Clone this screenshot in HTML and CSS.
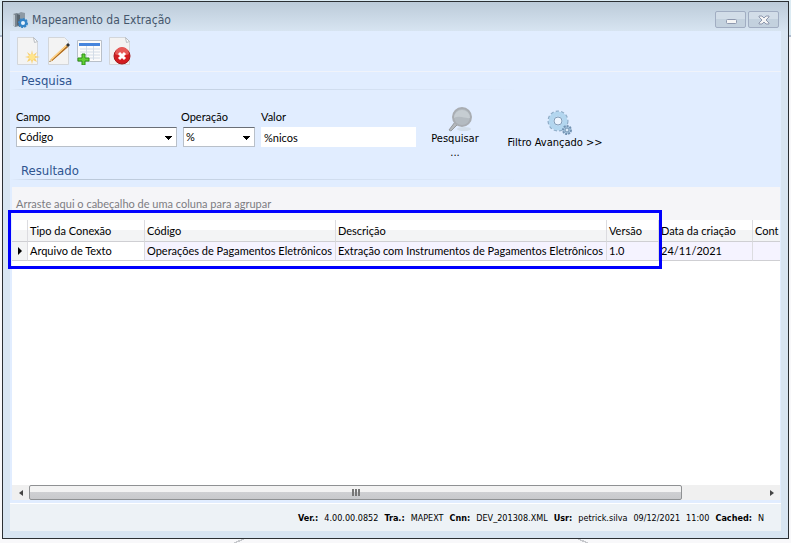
FILE: index.html
```
<!DOCTYPE html>
<html lang="pt-br">

<head>
    <meta charset="UTF-8">
    <meta name="viewport" content="width=device-width, initial-scale=1.0">
    <title>Mapeamento da Extração</title>
    <link rel="stylesheet" href="styles.css">
</head>

<body>
    <main class="janela">
        <header class="titulo">
            <svg class="logo" width="16" height="16" viewBox="0 0 16 16">
                <path d="M1 2l4-1 2 1v12l-4 1-2-2z" fill="#77838d" />
                <path d="M1 2l2 1v12l-2-2z" fill="#bcc7d0" />
                <path d="M5 2l4-2 4 1v13l-5 1-3-2z" fill="#8d9aa5" />
                <path d="M5 2l3 1v12l-3-2z" fill="#59656f" />
                <circle cx="11" cy="11" r="3" fill="#e8f4ff" stroke="#3484c7" stroke-width="2" />
                <circle cx="11" cy="11" r="4" fill="none" stroke="#3484c7" stroke-width="2" stroke-dasharray="2 1" />
            </svg>
            <h1>Mapeamento da Extração</h1>
            <button type="button" class="controle" aria-label="Minimizar">
                <svg width="12" height="12" viewBox="0 0 12 12">
                    <rect x="1.5" y="5.5" width="10" height="4" rx="1" fill="#f5f5f5" stroke="#8e98ae" />
                </svg>
            </button>
            <button type="button" class="controle" aria-label="Fechar">
                <svg width="12" height="12" viewBox="0 0 12 12">
                    <path d="M1 2h3l2 2 2-2h3v1L8 6l3 3v1H8L6 8l-2 2H1V9l3-3-3-3z" fill="#f5f5f5" stroke="#8e98ae" />
                </svg>
            </button>
        </header>

        <div class="conteudo">
            <nav class="ferramentas">
                <button type="button" aria-label="Novo">
                    <svg width="26" height="28" viewBox="0 0 26 28">
                        <path d="M2.5.5h16l4 4v23h-20z" fill="#f3f3f3" stroke="#d3d6da" />
                        <path d="M18.5.5l4 4-3 1z" fill="#fff" stroke="#b9bdc2" />
                        <path d="M17 13l1 5 4-3-2 4 5 1-5 1 2 4-4-2-1 4-1-4-4 2 2-4-4-1 4-1-2-4 4 3z" fill="#f8d06e" />
                        <circle cx="17" cy="20" r="3" fill="#ffe58c" />
                    </svg>
                </button>
                <button type="button" aria-label="Editar">
                    <svg width="26" height="28" viewBox="0 0 26 28">
                        <path d="M2.5.5h16l4 4v23h-20z" fill="#f3f3f3" stroke="#d3d6da" />
                        <path d="M3 25l2-3L20 8l2 2L6 24z" fill="#f2a33c" />
                        <path d="M5 22L20 8l1 1L6 23z" fill="#ffd58a" />
                        <path d="M6 24l16-14-1-1L6 23z" fill="#a86a26" />
                        <path d="M3 25l2-3 1 2z" fill="#dfc9a4" />
                        <path d="M3 25l1-1 1 0zM20 8l2-2 2 2-2 2z" fill="#333" />
                    </svg>
                </button>
                <button type="button" aria-label="Adicionar">
                    <svg width="26" height="28" viewBox="0 0 26 28">
                        <path d="M.5 3.5h24v21H.5z" fill="#fbfbfb" stroke="#b9c0c9" />
                        <path d="M2 6h21v3H2z" fill="#4584dc" />
                        <path d="M3 12h20M3 15h20M3 18h20M3 21h20M9.5 9v14M16.5 9v14" stroke="#d3dce7" />
                        <path d="M5 17h3v4h4v3H8v4H5v-4H1v-3h4z" fill="#62cf35" stroke="#2c9219" />
                    </svg>
                </button>
                <button type="button" aria-label="Excluir">
                    <svg width="26" height="28" viewBox="0 0 26 28">
                        <path d="M1.5.5h16l4 4v23h-20z" fill="#f3f3f3" stroke="#d3d6da" />
                        <path d="M17.5.5l4 4-3 1z" fill="#fff" stroke="#b9bdc2" />
                        <circle cx="14" cy="19" r="8" fill="#d31c20" stroke="#a31a1c" />
                        <path d="M7 17a7 7 0 0 1 14 0c-4 2-10 2-14 0z" fill="#e65a57" />
                        <path d="M11 16l6 6M17 16l-6 6" stroke="#fff" stroke-width="3" />
                    </svg>
                </button>
            </nav>

            <section class="pesquisa">
                <h2>Pesquisa</h2>
                <form class="filtros">
                    <p class="campo">
                        <label for="campo">Campo</label>
                        <select id="campo">
                            <option>Código</option>
                        </select>
                    </p>
                    <p class="campo operacao">
                        <label for="operacao">Operação</label>
                        <select id="operacao">
                            <option>%</option>
                        </select>
                    </p>
                    <p class="campo valor">
                        <label for="valor">Valor</label>
                        <input type="text" id="valor" value="%nicos">
                    </p>
                    <button type="button" class="acao pesquisar">
                        <svg width="34" height="26" viewBox="0 0 34 26">
                            <ellipse cx="26" cy="23" rx="7" ry="2" fill="#d3deea" />
                            <path d="M17 16l3 2-7 7-2-1z" fill="#b5b9bd" stroke="#94989c" />
                            <circle cx="24" cy="11" r="9" fill="#b4bbc1" stroke="#a9adb2" stroke-width="2" />
                            <path d="M16 12a8 8 0 0 1 16 0c-5 1-9-3-16 0z" fill="#c6cdd2" />
                        </svg>
                        <span>Pesquisar<br>...</span>
                    </button>
                    <button type="button" class="acao">
                        <svg width="34" height="26" viewBox="0 0 34 26">
                            <circle cx="20" cy="11" r="9" fill="none" stroke="#8daac5" stroke-width="3" stroke-dasharray="3 2" />
                            <circle cx="20" cy="11" r="7" fill="none" stroke="#b3d6ef" stroke-width="5" />
                            <circle cx="20" cy="11" r="4" fill="#edf5ff" stroke="#819cb7" />
                            <circle cx="29" cy="20" r="4" fill="#adcbe3" stroke="#7292b2" stroke-width="2" stroke-dasharray="2 1" />
                            <circle cx="29" cy="20" r="2" fill="#dcecfa" stroke="#7292b2" />
                        </svg>
                        <span>Filtro Avançado &gt;&gt;</span>
                    </button>
                </form>
            </section>

            <section class="resultado">
                <h2>Resultado</h2>
                <div class="grade">
                    <p class="agrupar">Arraste aqui o cabeçalho de uma coluna para agrupar</p>
                    <div class="area">
                        <table>
                            <colgroup>
                                <col class="c-marca">
                                <col class="c-tipo">
                                <col class="c-codigo">
                                <col class="c-descricao">
                                <col class="c-versao">
                                <col class="c-data">
                                <col class="c-cont">
                            </colgroup>
                            <thead>
                                <tr>
                                    <th></th>
                                    <th>Tipo da Conexão</th>
                                    <th>Código</th>
                                    <th>Descrição</th>
                                    <th>Versão</th>
                                    <th>Data da criação</th>
                                    <th>Cont</th>
                                </tr>
                            </thead>
                            <tbody>
                                <tr>
                                    <td class="marca"><svg width="4" height="8" viewBox="0 0 4 8"><path d="M0 0l4 4-4 4z" /></svg></td>
                                    <td class="foco">Arquivo de Texto</td>
                                    <td>Operações de Pagamentos Eletrônicos</td>
                                    <td>Extração com Instrumentos de Pagamentos Eletrônicos</td>
                                    <td>1.0</td>
                                    <td>24/11/2021</td>
                                    <td></td>
                                </tr>
                            </tbody>
                        </table>
                        <div class="destaque"></div>
                    </div>
                    <div class="rolagem">
                        <button type="button" aria-label="Rolar para a esquerda"><svg width="4" height="6" viewBox="0 0 4 6"><path d="M4 0L0 3l4 3z" fill="#444" /></svg></button>
                        <div class="trilho">
                            <div class="polegar"><i></i><i></i><i></i></div>
                        </div>
                        <button type="button" aria-label="Rolar para a direita"><svg width="4" height="6" viewBox="0 0 4 6"><path d="M0 0l4 3-4 3z" fill="#444" /></svg></button>
                    </div>
                </div>
            </section>

            <footer class="status">
                <b>Ver.:</b><span>4.00.00.0852</span>
                <b>Tra.:</b><span>MAPEXT</span>
                <b>Cnn:</b><span>DEV_201308.XML</span>
                <b>Usr:</b><span>petrick.silva</span>
                <span>09/12/2021</span><span>11:00</span>
                <b>Cached:</b><span>N</span>
            </footer>
        </div>
    </main>
</body>

</html>
```

FILE: styles.css
```
* {
    box-sizing: border-box;
}

body {
    background:
        linear-gradient(160deg, transparent 40%, #c6c8cc 40% 60%, transparent 60%) 30% 100% / 10px 4px no-repeat,
        linear-gradient(200deg, transparent 40%, #c6c8cc 40% 60%, transparent 60%) 74% 100% / 10px 4px no-repeat,
        linear-gradient(#dcebf3 0 35px, #aebbcd 35px 37px, #f8f8fa 37px);
    color: #000;
    display: flex;
    font-family: Lato, "Liberation Sans", sans-serif;
    font-size: 11px;
    line-height: 16px;
    margin: 0;
    min-height: 100vh;
    padding: 1px 2px 4px;
}

h1, h2, p {
    font-weight: normal;
    margin: 0;
}

h1, h2 {
    font-family: "DejaVu Sans Condensed", sans-serif;
}

button, input, select {
    color: inherit;
    font: inherit;
    margin: 0;
}

button {
    background: none;
    border: 0;
    padding: 0;
}

svg {
    display: block;
}

.janela {
    background: linear-gradient(#bccbd9, #d8e5f2 30px);
    border: 1px solid #2b2f33;
    display: flex;
    flex: 1;
    flex-direction: column;
    min-width: 0;
    padding: 0 7px 7px;
}

/* Barra de título */
.titulo {
    align-items: center;
    display: flex;
    gap: 2px;
    height: 29px;
    padding: 6px 2px 0;
}

.titulo h1 {
    color: #44566b;
    flex: 1;
    font-size: 12px;
    line-height: 16px;
    padding-left: 2px;
}

.controle {
    background: linear-gradient(#d2dde8 50%, #c3d1de 50%);
    border: 1px solid #a1adc2;
    border-radius: 2px;
    display: flex;
    height: 17px;
    justify-content: center;
    padding-top: 2px;
    width: 31px;
}

.conteudo {
    background: #e1edff;
    display: flex;
    flex: 1;
    flex-direction: column;
    min-width: 0;
}

.ferramentas {
    border-bottom: 1px solid #f0f3fa;
    display: flex;
    gap: 5px;
    height: 41px;
    padding: 6px 5px;
}

h2 {
    background: linear-gradient(90deg, #e1edff, #b7c5d6 5%, #e1edff 66%) 0 100% / 100% 1px no-repeat;
    color: #2f5590;
    font-size: 13px;
    height: 18px;
    line-height: 17px;
    padding-left: 11px;
}

/* Filtros da pesquisa */
.filtros {
    align-items: flex-start;
    display: flex;
    gap: 6px;
    height: 72px;
    padding: 16px 6px 0;
}

.campo {
    padding-top: 3px;
    width: 161px;
}

.operacao {
    width: 72px;
}

.valor {
    width: 155px;
}

.campo label {
    display: block;
    height: 18px;
}

.operacao label {
    margin-left: -2px;
}

.campo select, .campo input {
    background-color: #fff;
    border: 1px solid #b9c0c9;
    border-radius: 0;
    border-top-color: #6a6f76;
    display: block;
    height: 20px;
    padding: 0 2px;
    width: 100%;
}

.campo select {
    appearance: none;
    background-image: linear-gradient(#000, #000), linear-gradient(#000, #000), linear-gradient(#000, #000), linear-gradient(#000, #000);
    background-position: right 4px top 8px, right 5px top 9px, right 6px top 10px, right 7px top 11px;
    background-repeat: no-repeat;
    background-size: 7px 1px, 5px 1px, 3px 1px, 1px 1px;
}

.campo input {
    border-color: #fff;
}

.acao {
    align-items: center;
    display: flex;
    flex-direction: column;
    font-family: "DejaVu Sans Condensed", sans-serif;
    line-height: 14px;
    margin: 4px 0 0 14px;
    width: 110px;
}

.pesquisar {
    margin: 0 0 0 8px;
    width: 50px;
}

/* Grade de resultados */
.resultado {
    display: flex;
    flex: 1;
    flex-direction: column;
}

.grade {
    background: #fff;
    display: flex;
    flex: 1;
    flex-direction: column;
    margin: 7px 1px 0 2px;
    min-width: 0;
}

.agrupar {
    background: #f5f5f8;
    color: #7c7c82;
    height: 33px;
    padding: 9px 4px 0;
}

.area {
    flex: 1;
    position: relative;
}

table {
    border-collapse: separate;
    border-spacing: 0;
    table-layout: fixed;
    width: 100%;
}

th, td {
    border-bottom: 1px solid #cfcfd3;
    border-right: 1px solid #dcdce0;
    font-weight: normal;
    overflow: hidden;
    padding: 0 2px;
    text-align: left;
    white-space: nowrap;
}

th {
    background: linear-gradient(#fff 50%, #f3f4f5 50%);
    height: 22px;
}

td {
    background: #f5f3ff;
    height: 19px;
}

th:last-child, td:last-child {
    border-right: 0;
}

.foco {
    background: #fff;
}

.marca {
    background: #f3f4f5;
    padding: 0 6px;
}

.c-marca {
    width: 16px;
}

.c-tipo {
    width: 117px;
}

.c-codigo {
    width: 191px;
}

.c-descricao {
    width: 271px;
}

.c-versao {
    width: 52px;
}

.c-data {
    width: 94px;
}

/* Moldura azul sobre as colunas principais */
.destaque {
    border: 3px solid #0000fe;
    height: 59px;
    left: -4px;
    position: absolute;
    top: -10px;
    width: 654px;
}

.rolagem {
    background: #f0f0f0;
    display: flex;
    height: 15px;
}

.rolagem button {
    display: flex;
    align-items: center;
    justify-content: center;
    width: 17px;
}

.trilho {
    flex: 1;
}

.polegar {
    align-items: center;
    background: linear-gradient(#f3f3f3 45%, #cfd0d3 45%, #c8c9cc);
    border: 1px solid #8f9193;
    border-radius: 2px;
    display: flex;
    gap: 1px;
    height: 15px;
    justify-content: center;
    width: 89%;
}

.polegar i {
    background: #777;
    height: 7px;
    width: 2px;
}

.status {
    background: #edf2f6;
    border-top: 1px solid #fff;
    display: flex;
    font-family: "DejaVu Sans Condensed", sans-serif;
    font-size: 9px;
    gap: 6px;
    height: 28px;
    justify-content: flex-end;
    margin-top: 3px;
    padding: 6px 17px 0;
    white-space: nowrap;
}
```
